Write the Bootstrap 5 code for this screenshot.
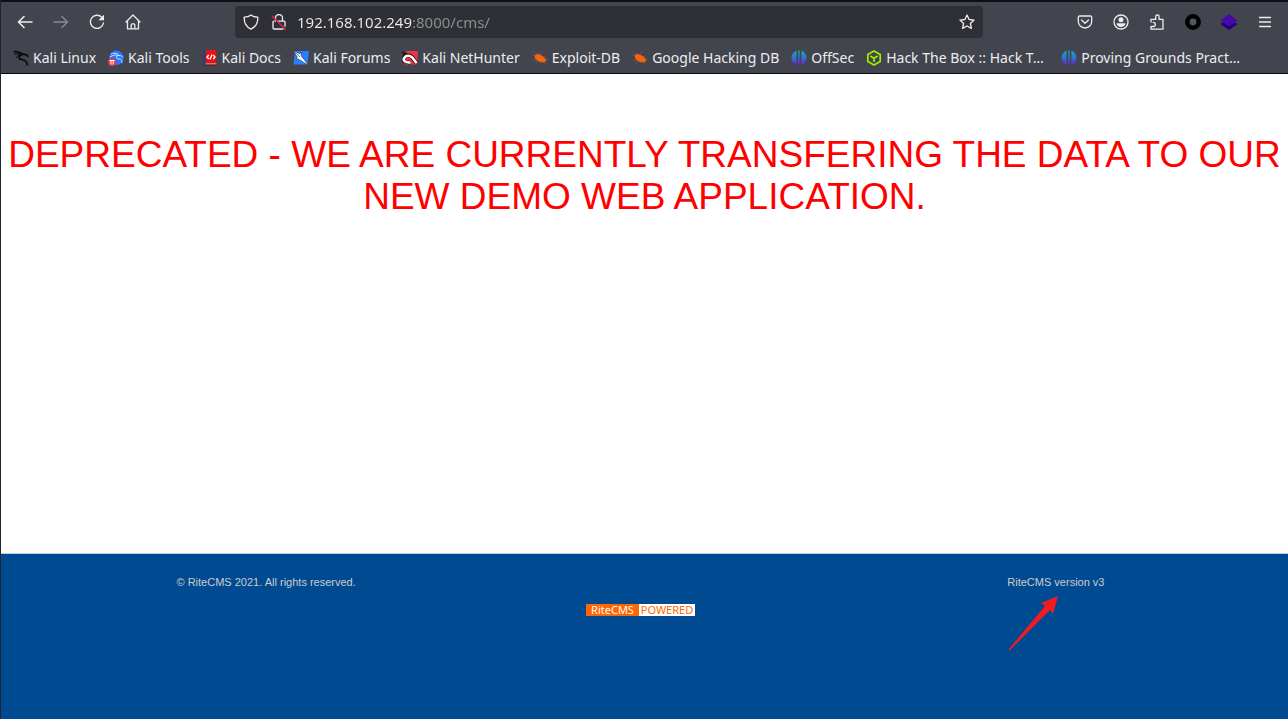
<!DOCTYPE html>
<html lang="en">
<head>
<meta charset="utf-8">
<meta name="viewport" content="width=device-width, initial-scale=1">
<title>RiteCMS</title>
<link href="https://cdn.jsdelivr.net/npm/bootstrap@5.3.0/dist/css/bootstrap.min.css" rel="stylesheet">
<style>
body { font-family: "Liberation Sans", Arial, sans-serif; border-left: 1px solid #23242f; background: #fff; }
.browser-chrome { background: #42454d; border-top: 2px solid #0e0f14; border-bottom: 1px solid #08080c; font-family: "Noto Sans", sans-serif; color: #ededf0; }
.toolbar { height: 40px; padding: 0 5px 0 6px; }
.tool-btn { width: 36px; height: 32px; padding: 0; border: 0; background: none; color: #ededf0; display: flex; align-items: center; justify-content: center; flex: none; }
.tool-btn:disabled { color: #8b8d93; }
.tool-btn svg, .bookmark svg { width: 16px; height: 16px; flex: none; display: block; }
.line-icon { fill: none; stroke: currentColor; stroke-width: 1.3; stroke-linecap: round; stroke-linejoin: round; }
.address { height: 32px; background: #2f3035; border-radius: 4px; margin: 0 84px; padding: 0 8px; }
.address .tool-btn { width: 16px; }
/* The host is bright, the port and path after it are dimmed. */
.address-text { font-size: 15px; height: 32px; min-width: 0; padding: 0; border: 0; outline: 0; margin-left: 10px; color: transparent; caret-color: #fff; background: linear-gradient(to right, #ededf0 115px, #8e8f93 0); -webkit-background-clip: text; background-clip: text; }
.bookmarks { height: 31px; padding: 0 12px; gap: 12px; font-size: 14px; line-height: 20px; }
.bookmark { color: #ededf0; text-decoration: none; gap: 4px; white-space: nowrap; }
.bookmark-long { min-width: 183px; }
.notice { color: #f00; font-size: 37px; line-height: 42px; margin: 60px 4px 0; font-weight: 400; }
.site-footer { background: #004a91; border-top: 1px solid #c8ccd0; color: #ccc; font-size: 11px; line-height: 16px; min-height: 166px; padding-top: 20px; }
.footer-inner { max-width: 936px; margin: 0 auto; padding-right: 8px; }
.powered { font: 11px/12px "Noto Sans", sans-serif; text-decoration: none; display: inline-flex; margin-top: 14px; }
.powered-name { background: #f60; color: #fff; width: 53px; text-align: center; }
.powered-word { background: #fff; color: #f60; width: 56px; text-align: center; }
.version-note { position: relative; }
.pointer-arrow { position: absolute; right: 47px; top: 22px; width: 50px; height: 55px; }
</style>
<script src="https://cdn.jsdelivr.net/npm/bootstrap@5.3.0/dist/js/bootstrap.bundle.min.js"></script>
</head>
<body class="d-flex flex-column min-vh-100">
<svg width="0" height="0" class="position-absolute" aria-hidden="true">
  <defs>
    <linearGradient id="tealViolet" x1="0" y1="0" x2="0" y2="1"><stop offset="0" stop-color="#0ab5c4"/><stop offset=".55" stop-color="#3568d4"/><stop offset="1" stop-color="#7a16e0"/></linearGradient>
    <symbol id="offsec" viewBox="0 0 16 16"><path fill="url(#tealViolet)" d="M5.500.8v13.800C2.600 13.600.5 11 .5 7.800S2.600 1.800 5.500.8ZM10.500.8v13.800c2.900-1 5-3.600 5-6.800s-2.100-6-5-7ZM7.300.4h1.400v15H7.300Z"/></symbol>
    <symbol id="exploit" viewBox="0 0 16 16"><path fill="#f26411" d="M2.500 5.500 5 4l3 .5 4 2.500 2.500 3.500-2.500 2-4-.5-3-1.500-2-2.500Z"/><path fill="none" stroke="#b9561f" stroke-width=".6" d="M3 6 .5 4.500M5 4.500 3 2.500M8 4.500 9.500 2M11 7l3-1M13 9h3M4 10H1M6 11l-2 2M9 11.500l-1 2M12 12l2 1"/></symbol>
  </defs>
</svg>
<header class="browser-chrome">
  <div class="toolbar d-flex align-items-center">
    <button class="tool-btn" type="button" aria-label="Back"><svg class="line-icon" viewBox="0 0 16 16"><path stroke-width="1.600" d="M15 8H1.500M7 2.500 1.500 8 7 13.500"/></svg></button>
    <button class="tool-btn" type="button" aria-label="Forward" disabled><svg class="line-icon" viewBox="0 0 16 16"><path d="M1 8h13.500M9 2.500 14.500 8 9 13.500"/></svg></button>
    <button class="tool-btn" type="button" aria-label="Reload"><svg class="line-icon" viewBox="0 0 16 16"><path d="M12.800 3.300A6.600 6.600 0 1 0 14.500 9"/><path fill="currentColor" stroke="none" d="M15 .7v5.600H9.400Z"/></svg></button>
    <button class="tool-btn" type="button" aria-label="Home"><svg class="line-icon" viewBox="0 0 16 16"><path d="M1 8 8 1l7 7M2.500 6.800v8.100h11V6.800M6.200 14.900v-4a1 1 0 0 1 1-1h1.600a1 1 0 0 1 1 1v4"/></svg></button>
    <div class="address d-flex align-items-center flex-grow-1">
      <button class="tool-btn" type="button" aria-label="Tracking protection"><svg class="line-icon" viewBox="0 0 16 16"><path d="M8 .9c2 1.600 4.200 2.100 6.800 2.300.2 5.300-1.600 9.500-6.800 12C2.800 12.700 1 8.500 1.200 3.200 3.800 3 6 2.500 8 .9Z"/></svg></button>
      <button class="tool-btn ms-2 ps-1 w-auto" type="button" aria-label="Connection is not secure"><svg class="line-icon" viewBox="0 0 16 16"><path d="M4.500 7V4a3.500 3.500 0 0 1 7 0v3M7 7.200h6a1 1 0 0 1 1 1v4M12 15H3a1 1 0 0 1-1-1V8.200a1 1 0 0 1 1-1"/><path stroke="#e2204e" stroke-width="1.500" d="m1 2 13.500 13.500"/></svg></button>
      <input class="address-text flex-grow-1" type="text" aria-label="Address" spellcheck="false" value="192.168.102.249:8000/cms/">
      <button class="tool-btn" type="button" aria-label="Bookmark this page"><svg class="line-icon" viewBox="0 0 16 16"><path d="m8 1 2.100 4.500 5 .6-3.700 3.400 1 4.900L8 12l-4.400 2.400 1-4.900L.9 6.100l5-.6Z"/></svg></button>
    </div>
    <button class="tool-btn" type="button" aria-label="Save to Pocket"><svg class="line-icon" viewBox="0 0 16 16"><path d="M2.600 2h10.800a1.300 1.300 0 0 1 1.300 1.300v4A6.700 6.700 0 0 1 1.300 7.300v-4A1.300 1.300 0 0 1 2.600 2ZM4.500 6 8 9.300 11.500 6"/></svg></button>
    <button class="tool-btn" type="button" aria-label="Account"><svg class="line-icon" viewBox="0 0 16 16"><circle cx="8" cy="8" r="7"/><circle cx="8" cy="5.800" r="2.500" fill="currentColor" stroke="none"/><path fill="currentColor" stroke="none" d="M3.500 9.300h9c0 2-2 3.700-4.500 3.700s-4.500-1.700-4.500-3.700Z"/></svg></button>
    <button class="tool-btn" type="button" aria-label="Extensions"><svg class="line-icon" viewBox="0 0 16 16"><path d="M2 8V5.400h4.700V2.700a1.700 1.700 0 0 1 3.400 0v2.700H14v9.800H2v-2.700h2.200a2 2 0 0 0 0-4.200"/></svg></button>
    <button class="tool-btn" type="button" aria-label="Proxy extension"><svg viewBox="0 0 16 16"><circle cx="8" cy="8" r="5.700" fill="#53565e" stroke="#000" stroke-width="4.500"/></svg></button>
    <button class="tool-btn" type="button" aria-label="Technology profiler"><svg viewBox="0 0 16 16"><path fill="#270073" d="M0 9.500 3 8l5 3 5-3 3 1.500v1L8 16l-8-5.500Z"/><path fill="#4609a6" d="m8 0 8 6v1l-8 5.500L0 7V6Z"/></svg></button>
    <button class="tool-btn" type="button" aria-label="Open menu"><svg class="line-icon" viewBox="0 0 16 16"><path d="M2.500 3.500h11M2.500 8h11M2.500 12.500h11"/></svg></button>
  </div>
  <nav class="bookmarks d-flex align-items-center overflow-hidden" aria-label="Bookmarks">
    <a class="bookmark d-flex align-items-center" href="#"><svg viewBox="0 0 16 16" fill="none" stroke="#08090b"><path stroke-width="1.700" d="M.5 1.500c4 0 7 .6 9.500 2.700L14 5l1 2M9.500 4.500C5 5.500 5 9 9 9.500c3.500.4 5 2.500 5.500 6"/><path d="M1 4.500c2.500-1 5-1 8-.2M3 8c1-2 3-3.500 6-3.500"/></svg>Kali Linux</a>
    <a class="bookmark d-flex align-items-center" href="#"><svg viewBox="0 0 16 16"><circle cx="8.300" cy="7.800" r="7.300" fill="#2777ff"/><path d="M3 4c4-1.500 7-.4 8 1.500 2 0 3 .5 4 2M11 5.500C7 6 8 9 11 9s3 2 2.700 4M2 7c3-2 6-2.500 8-1.500" fill="none" stroke="#c9e2ff"/><circle cx="4" cy="12" r="4" fill="#e83742"/><path d="M1.500 10.500h5M3 10.500v4M5.200 10.500v4" stroke="#fff"/></svg>Kali Tools</a>
    <a class="bookmark d-flex align-items-center" href="#"><svg viewBox="0 0 16 16"><path fill="#1c4079" d="M1.500 0H4v16H1.500Z"/><path fill="#ea1013" d="M3.500 0h10.800v13.500H3.500Z"/><path fill="#d5d5da" d="M3.500 13.500h10.800v1H3.500Z"/><path fill="#801018" d="M3.500 14.500h10.800V16H3.500Z"/><path d="M6.700 5 5 7l1.700 2M11.300 5 13 7l-1.700 2M8 9.500l2-5" fill="none" stroke="#fff" stroke-width="1.300"/></svg>Kali Docs</a>
    <a class="bookmark d-flex align-items-center" href="#"><svg viewBox="0 0 16 16"><path fill="#2581ff" d="M2 1h14l-1.500 13.500H.5Z"/><path fill="#fff" stroke="#182437" stroke-width=".6" d="m.3.5 6 3 2.200-.8-.3 3 3.500 4.500 3.800 5.300-5.200-3.300-4.600-3-2.600.3 1.200-2.300Z"/><path d="m2 2 5 5" stroke="#183760" stroke-width=".6"/></svg>Kali Forums</a>
    <a class="bookmark d-flex align-items-center" href="#"><svg viewBox="0 0 16 16"><path fill="#ef3340" d="M4 1h12l-1 13.500H2Z"/><path fill="#24171c" d="M0 1 7 4l-5 4Z"/><path d="M8.500 12.500C3 13 .5 10 2 7.500c1.500-3 7-2.500 8.500.3L14.500 13" fill="none" stroke="#35111a" stroke-width="4"/><path d="M8.500 12.500C3 13 .5 10 2.500 7.500c1.800-2.500 6-2.200 8 .3l4 5.200" fill="none" stroke="#fff" stroke-width="2.500"/></svg>Kali NetHunter</a>
    <a class="bookmark d-flex align-items-center" href="#"><svg><use href="#exploit"/></svg>Exploit-DB</a>
    <a class="bookmark d-flex align-items-center" href="#"><svg><use href="#exploit"/></svg>Google Hacking DB</a>
    <a class="bookmark d-flex align-items-center" href="#"><svg><use href="#offsec"/></svg>OffSec</a>
    <a class="bookmark bookmark-long d-flex align-items-center" href="#"><svg viewBox="0 0 16 16" fill="none" stroke="#9fef00" stroke-width="1.700" stroke-linejoin="round"><path d="m8 1 6.200 3.500v7L8 15l-6.200-3.500v-7ZM4.300 6 8 8.200 11.700 6M8 8.200V12"/></svg>Hack The Box :: Hack T…</a>
    <a class="bookmark d-flex align-items-center" href="#"><svg><use href="#offsec"/></svg>Proving Grounds Pract…</a>
  </nav>
</header>
<main class="flex-grow-1">
  <h1 class="notice text-center">DEPRECATED - WE ARE CURRENTLY TRANSFERING THE DATA TO OUR NEW DEMO WEB APPLICATION.</h1>
</main>
<footer class="site-footer">
  <div class="footer-inner">
    <div class="d-flex justify-content-between">
      <span>© RiteCMS 2021. All rights reserved.</span>
      <span class="version-note">RiteCMS version v3
        <svg class="pointer-arrow" viewBox="0 0 50 55" aria-hidden="true"><path fill="#f01c24" d="M50 0 45 18l-3-4L1.500 54.500.5 53.500 37 10l-4-3Z"/></svg>
      </span>
    </div>
    <div class="text-center"><a class="powered" href="#"><span class="powered-name">RiteCMS</span><span class="powered-word">POWERED</span></a></div>
  </div>
</footer>
</body>
</html>
